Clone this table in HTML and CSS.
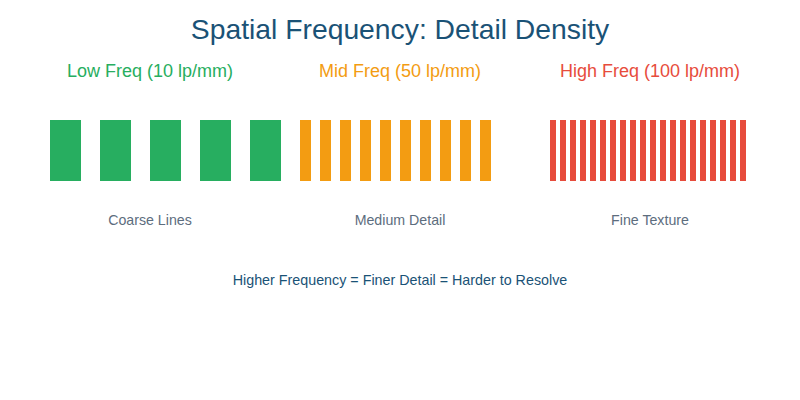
FILE: index.html
```html
<!DOCTYPE html>
<html>
<head>
<meta charset="utf-8">
<link rel="stylesheet" href="styles.css">
</head>
<body>
<div class="page">
  <h1 class="title">Spatial Frequency: Detail Density</h1>
  <div class="panels">
    <div class="panel">
      <div class="label low">Low Freq (10 lp/mm)</div>
      <div class="bars bars-low">
        <span></span><span></span><span></span><span></span><span></span>
      </div>
      <div class="caption">Coarse Lines</div>
    </div>
    <div class="panel">
      <div class="label mid">Mid Freq (50 lp/mm)</div>
      <div class="bars bars-mid">
        <span></span><span></span><span></span><span></span><span></span>
        <span></span><span></span><span></span><span></span><span></span>
      </div>
      <div class="caption">Medium Detail</div>
    </div>
    <div class="panel">
      <div class="label high">High Freq (100 lp/mm)</div>
      <div class="bars bars-high">
        <span></span><span></span><span></span><span></span><span></span>
        <span></span><span></span><span></span><span></span><span></span>
        <span></span><span></span><span></span><span></span><span></span>
        <span></span><span></span><span></span><span></span><span></span>
      </div>
      <div class="caption">Fine Texture</div>
    </div>
  </div>
  <p class="summary">Higher Frequency = Finer Detail = Harder to Resolve</p>
</div>
</body>
</html>
```

FILE: styles.css
```css
html, body {
  margin: 0;
  padding: 0;
  background: #ffffff;
}

.page {
  width: 800px;
  height: 400px;
  font-family: "Liberation Sans", Arial, sans-serif;
  padding-top: 13px;
  box-sizing: border-box;
}

.title {
  margin: 0;
  font-size: 28.3px;
  line-height: 32px;
  font-weight: normal;
  text-align: center;
  color: #1a5276;
}

.panels {
  display: grid;
  grid-template-columns: 250px 250px 250px;
  padding-left: 25px;
  margin-top: 15px;
}

.panel {
  display: flex;
  flex-direction: column;
  min-width: 0;
}

.label {
  font-size: 18px;
  line-height: 22px;
  text-align: center;
}

.low { color: #27ae60; }
.mid { color: #f39c12; }
.high { color: #e74c3c; }

.bars {
  display: flex;
  height: 61px;
  margin-top: 38px;
  padding-left: 25px;
}

.bars span {
  display: block;
  flex: 0 0 auto;
  height: 61px;
}

.bars-low { gap: 19px; }
.bars-low span { width: 31px; background: #27ae60; }

.bars-mid { gap: 9px; }
.bars-mid span { width: 11px; background: #f39c12; }

.bars-high { gap: 4px; }
.bars-high span { width: 6px; background: #e74c3c; }

.caption {
  margin-top: 31px;
  font-size: 14.2px;
  line-height: 16px;
  text-align: center;
  color: #5d6d7e;
}

.summary {
  margin: 44px 0 0;
  font-size: 14.3px;
  line-height: 16px;
  text-align: center;
  color: #1a5276;
}
```
